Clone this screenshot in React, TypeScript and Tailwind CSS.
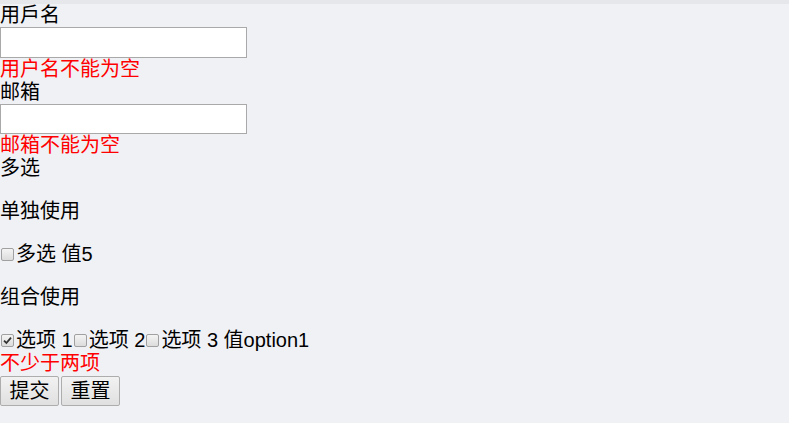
import React from 'react';

function Box({ checked = false }: { checked?: boolean }) {
  return (
    <span className="inline-flex shrink-0 items-center justify-center w-[13px] h-[13px] ml-[1px] mr-[2px] rounded-[2px] border border-[#a0a0a0] bg-gradient-to-b from-[#f4f4f4] to-[#dcdcdc]">
      {checked && (
        <svg width="9" height="9" viewBox="0 0 9 9" fill="none">
          <path d="M1 4.6L3.4 7L8 1.6" stroke="#333" strokeWidth="1.8" />
        </svg>
      )}
    </span>
  );
}

export default function App() {
  return (
    <div
      className="min-h-screen bg-[#f0f1f5] text-[20px] leading-[23px] text-black"
      style={{ fontFamily: '"Liberation Sans", "Noto Sans CJK SC", sans-serif' }}
    >
      <div className="h-[4px] bg-[#e6e7ea]" />
      <form>
        <div className="h-[23px]">用戶名</div>
        <input className="block w-[247px] h-[30.5px] bg-white border border-[#a9a9a9] outline-none" />
        <div className="h-[23px] text-[#ff0000]">用户名不能为空</div>
        <div className="h-[23px]">邮箱</div>
        <input className="block w-[247px] h-[30.5px] bg-white border border-[#a9a9a9] outline-none" />
        <div className="h-[23px] text-[#ff0000]">邮箱不能为空</div>
        <div className="h-[23px]">多选</div>

        <p className="mt-[20px] h-[23px]">单独使用</p>
        <p className="mt-[20px] h-[23px] flex items-center">
          <Box />
          <span>多选 值5</span>
        </p>

        <p className="mt-[20px] h-[23px]">组合使用</p>
        <p className="mt-[20px] h-[23px] flex items-center">
          <Box checked />
          <span>选项 1</span>
          <Box />
          <span>选项 2</span>
          <Box />
          <span>选项 3 值option1</span>
        </p>
        <div className="h-[23px] text-[#ff0000]">不少于两项</div>

        <div className="mt-[1px] flex gap-[2px]">
          <button type="button" className="h-[30px] w-[59px] border border-[#adadad] rounded-[2px] bg-gradient-to-b from-[#f2f2f2] to-[#e0e0e0]">
            提交
          </button>
          <button type="button" className="h-[30px] w-[59px] border border-[#adadad] rounded-[2px] bg-gradient-to-b from-[#f2f2f2] to-[#e0e0e0]">
            重置
          </button>
        </div>
      </form>
    </div>
  );
}
